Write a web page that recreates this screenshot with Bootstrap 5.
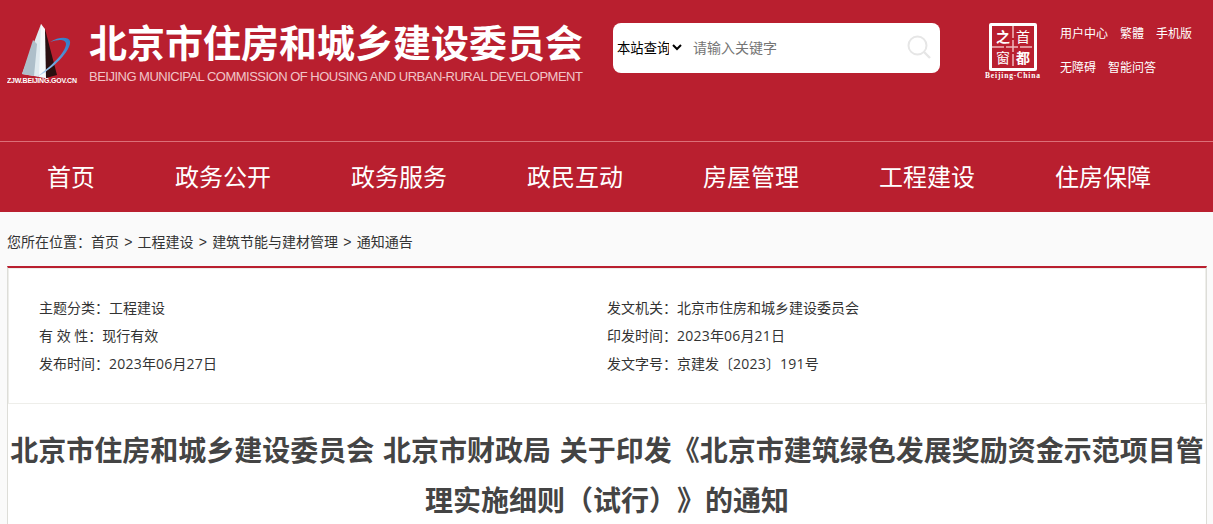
<!DOCTYPE html>
<html lang="zh-CN">
<head>
<meta charset="utf-8">
<title>通知</title>
<link rel="stylesheet" href="https://cdn.jsdelivr.net/npm/bootstrap@5.3.0/dist/css/bootstrap.min.css">
<style>
html,body{height:524px;overflow:hidden}
body{background:#fafafa;font-family:"Open Sans","Noto Sans CJK SC","Liberation Sans",sans-serif;font-size:14px;color:#333;text-spacing-trim:space-all}
.site-top{background:#b91f2f;height:141px;padding:23px 0 0 7px;color:#fff}
.logo-box{width:72px;height:62px;flex:none}
.brand{margin-left:10px;width:500px}
.brand-cn{font-family:"Noto Sans CJK SC",sans-serif;font-size:38px;font-weight:700;line-height:38px;margin-top:-1px;white-space:nowrap}
.brand-en{font-family:"Liberation Sans",sans-serif;font-size:13px;letter-spacing:-.51px;color:#f1c5c8;line-height:16px;margin-top:9px;white-space:nowrap}
.search-box{margin-left:24px;width:327px;height:50px;background:#fff;border-radius:8px;padding:0 9px 2px 0}
.search-scope{font-family:"Noto Sans CJK SC",sans-serif;font-size:13.33px;color:#000;border:0;background:transparent;padding:0;outline:0;width:72px;flex:none}
.search-hint{font-family:"Noto Sans CJK SC",sans-serif;font-size:14px;color:#333;border:0;outline:0;margin-left:8px;padding:0;min-width:0;flex:1 1 auto;background:transparent}
.search-hint::placeholder{color:#757575;opacity:1}
.seal-box{margin-left:45px;width:56px;flex:none}
.links-box{margin-left:19px;font-size:12px;line-height:34px;margin-top:-7px;font-family:"Noto Sans CJK SC",sans-serif}
.links-box span{margin-right:12px}
.main-nav{background:#b91f2f;border-top:1px solid #dc6f78;height:71px;padding-left:7px}
.main-nav a{font-family:"Noto Sans CJK SC",sans-serif;color:#fff;font-size:24px;text-decoration:none;padding:0 40px;line-height:68px;white-space:nowrap}
.crumbs{height:54px;padding:0 0 0 7px;line-height:58px;font-size:14px;color:#333;white-space:nowrap;font-family:"Noto Sans CJK SC",sans-serif}
.crumb-sep{font-family:"Liberation Sans",sans-serif;margin:0 5.2px}
.sheet{margin:0 6px 0 7px;background:#fff;border-top:2px solid #b91f2f;border-left:1px solid #ddddd8;border-right:1px solid #ddddd8;height:258px}
.meta-block{height:136px;border:1px solid #eeeeea;padding:25px 30px 0;font-size:14px;line-height:28px}
.meta-col{width:568px}
.num{letter-spacing:.25px}
.doc-title{font-family:"Noto Sans CJK SC",sans-serif;font-size:28px;font-weight:700;line-height:50px;text-align:center;color:#444;margin:20px 0 0 -2px;word-spacing:2.5px;width:1202px}
</style>
</head>
<body>
<div class="site-top d-flex align-items-start">
  <div class="logo-box">
    <svg width="72" height="62" viewBox="7 23 72 62">
      <defs><linearGradient id="ringfill" x1="0" y1="1" x2="1" y2="0"><stop offset="0" stop-color="#d7e6f4"/><stop offset=".5" stop-color="#5f9fdc"/><stop offset="1" stop-color="#2f78c4"/></linearGradient></defs>
      <polygon points="41,24 22,74 46,78 47,38" fill="#dfeaef"/>
      <polygon points="33,40 22,74 34,76 37,44" fill="#aebfca"/>
      <polygon points="41,24 45,29 46,78 39,77" fill="#f7f9fa"/>
      <polygon points="45,29 57,75 46,78" fill="#2a0f10"/>
      <path d="M50 42C58 37 68 36 70 41 72 50 52 70 35 78 50 68 66 52 66 44 66 39 58 39 50 42Z" fill="url(#ringfill)"/>
      <text x="7" y="83" fill="#fff" font-size="7" font-weight="700" font-family="Liberation Sans" textLength="70">ZJW.BEIJING.GOV.CN</text>
    </svg>
  </div>
  <div class="brand">
    <div class="brand-cn">北京市住房和城乡建设委员会</div>
    <div class="brand-en">BEIJING MUNICIPAL COMMISSION OF HOUSING AND URBAN-RURAL DEVELOPMENT</div>
  </div>
  <form class="search-box d-flex align-items-center">
    <select class="search-scope" aria-label="范围"><option>本站查询</option></select>
    <input class="search-hint" type="text" placeholder="请输入关键字" aria-label="关键字">
    <svg width="24" height="24" viewBox="0 0 24 24" class="flex-shrink-0"><circle cx="10.5" cy="10.5" r="9" fill="none" stroke="#e6e6e6" stroke-width="2"/><path d="M17 17 23 23" stroke="#e6e6e6" stroke-width="2.4"/></svg>
  </form>
  <div class="seal-box">
    <svg width="56" height="58" viewBox="0 0 56 58">
      <rect x="4" y="0" width="48" height="48" rx="2" fill="#fff"/>
      <rect x="7" y="3" width="42" height="42" fill="#b91f2f"/>
      <path d="M28 3V45M7 24H49" stroke="#f0b9bd" stroke-width="1.5" stroke-dasharray="12 2"/>
      <text x="18" y="19" text-anchor="middle" fill="#fff" font-size="14" font-weight="700" font-family="Noto Sans CJK SC">之</text>
      <text x="38" y="19" text-anchor="middle" fill="#fff" font-size="14" font-family="Noto Sans CJK SC">首</text>
      <text x="18" y="40" text-anchor="middle" fill="#fff" font-size="14" font-family="Noto Sans CJK SC">窗</text>
      <text x="38" y="40" text-anchor="middle" fill="#fff" font-size="14" font-weight="700" font-family="Noto Sans CJK SC">都</text>
      <text x="0" y="55" fill="#fff" font-size="7.5" font-weight="700" font-family="Liberation Serif" textLength="55">Beijing-China</text>
    </svg>
  </div>
  <div class="links-box">
    <div><span>用户中心</span><span>繁體</span><span>手机版</span></div>
    <div><span>无障碍</span><span>智能问答</span></div>
  </div>
</div>
<nav class="main-nav d-flex">
  <a href="#">首页</a><a href="#">政务公开</a><a href="#">政务服务</a><a href="#">政民互动</a><a href="#">房屋管理</a><a href="#">工程建设</a><a href="#">住房保障</a>
</nav>
<div class="crumbs">您所在位置：首页<span class="crumb-sep">&gt;</span>工程建设<span class="crumb-sep">&gt;</span>建筑节能与建材管理<span class="crumb-sep">&gt;</span>通知通告</div>
<div class="sheet">
  <div class="meta-block d-flex">
    <div class="meta-col">
      <div>主题分类：工程建设</div>
      <div>有 效 性：现行有效</div>
      <div>发布时间：<span class="num">2023</span>年<span class="num">06</span>月<span class="num">27</span>日</div>
    </div>
    <div class="meta-col">
      <div>发文机关：北京市住房和城乡建设委员会</div>
      <div>印发时间：<span class="num">2023</span>年<span class="num">06</span>月<span class="num">21</span>日</div>
      <div>发文字号：京建发〔<span class="num">2023</span>〕<span class="num">191</span>号</div>
    </div>
  </div>
  <h1 class="doc-title">北京市住房和城乡建设委员会 北京市财政局 关于印发《北京市建筑绿色发展奖励资金示范项目管理实施细则（试行）》的通知</h1>
</div>
<script src="https://cdn.jsdelivr.net/npm/bootstrap@5.3.0/dist/js/bootstrap.bundle.min.js"></script>
</body>
</html>
